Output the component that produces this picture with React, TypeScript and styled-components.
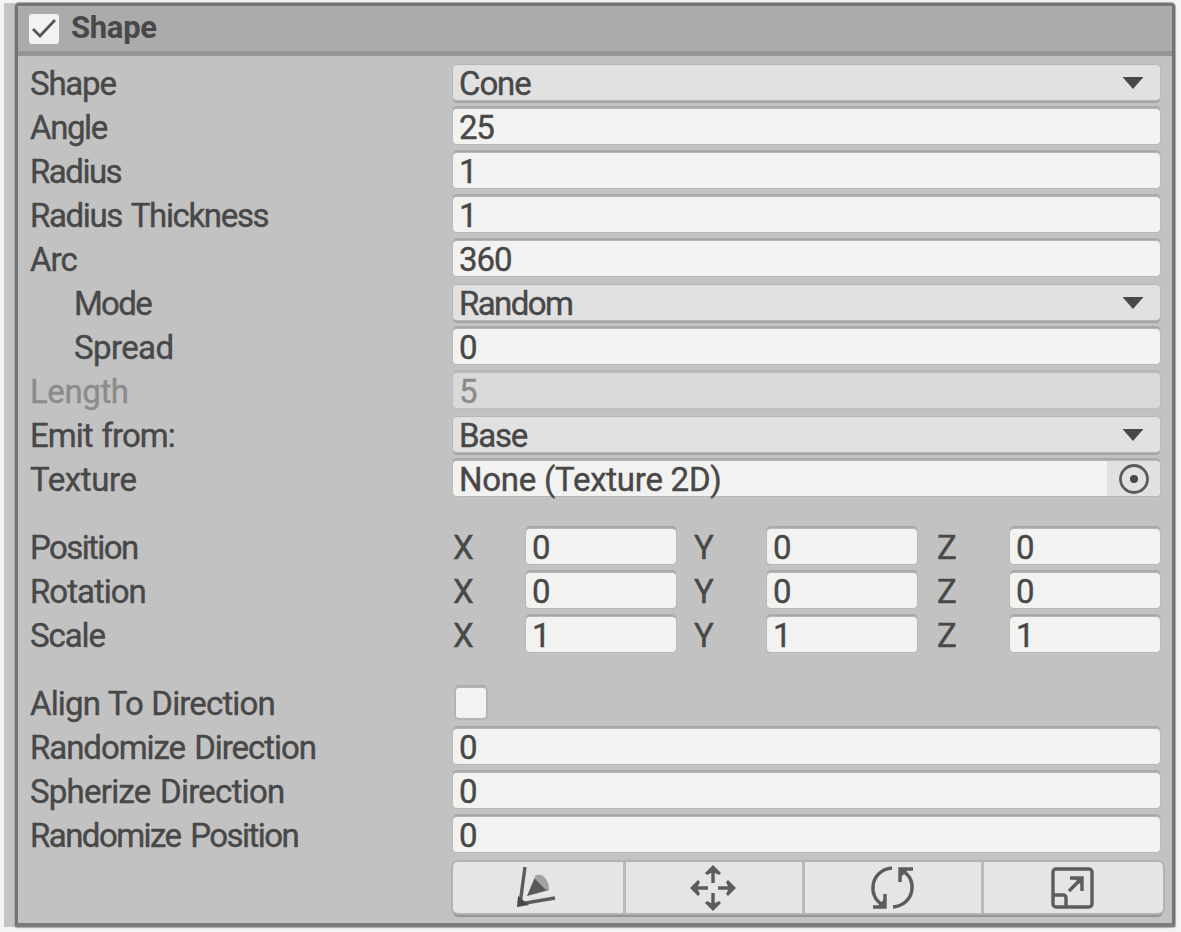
import React from "react";
import styled, { createGlobalStyle, css } from "styled-components";

const Global = createGlobalStyle`
  * { box-sizing: border-box; }
  body {
    margin: 0;
    background: #f4f4f3;
    font-family: Roboto, "Liberation Sans", sans-serif;
    color: #484848;
    -webkit-text-stroke: 0.4px currentColor;
  }
`;

const Page = styled.main`
  width: 1181px;
  height: 932px;
  padding: 3px 6px 5px 4px;
  display: flex;
`;

const Gutter = styled.div`
  flex: none;
  width: 11px;
  background: #c4c4c4;
`;

const Panel = styled.section`
  flex: 1;
  min-width: 0;
  display: flex;
  flex-direction: column;
  background: #c2c2c2;
  border: 3px solid #747474;
  border-bottom: 4px solid #7c7c7c;
  border-radius: 4px 4px 2px 2px;
  box-shadow: 0 0 1px 1px #a9a9a9;
`;

const Header = styled.header`
  height: 50px;
  display: flex;
  align-items: center;
  gap: 12px;
  padding: 0 0 0 11px;
  background: #ababab;
  border-bottom: 5px solid #959595;
  border-radius: 3px 3px 0 0;
`;

const Title = styled.h1`
  margin: 0 0 1px;
  font-size: 31px;
  line-height: 36px;
  font-weight: 700;
  letter-spacing: -0.3px;
  -webkit-text-stroke: 0;
`;

const CheckBox = styled.span<{ $outlined?: boolean }>`
  width: 30px;
  height: 30px;
  display: flex;
  border-radius: 3px;
  background: #f2f2f0;
  ${(p) => p.$outlined && css`
    margin: 3px 0 0 3px;
    box-shadow: 0 0 0 2px #b3b3b3, 0 -3px 0 0 #a9a9a9;
  `}
`;

const Body = styled.div`
  padding: 5px 0 0 12px;
`;

const Row = styled.div<{ $dim?: boolean }>`
  height: 44px;
  display: grid;
  grid-template-columns: 423px 707px;
  align-items: start;
  padding-top: 4px;
  color: ${(p) => (p.$dim ? "#8b8b8b" : "#484848")};
`;

const Spacer = styled.div`
  height: 24px;
`;

const Label = styled.span<{ $indent?: boolean; $track: number; $word?: number }>`
  padding-left: ${(p) => (p.$indent ? 44 : 0)}px;
  font-size: 33px;
  line-height: 38px;
  white-space: nowrap;
  letter-spacing: ${(p) => p.$track}px;
  word-spacing: ${(p) => p.$word ?? 0}px;
`;

const Field = styled.div<{ $kind?: "input" | "menu" | "dim" }>`
  height: 35px;
  display: flex;
  align-items: center;
  justify-content: space-between;
  padding-left: 6px;
  border-radius: 4px;
  font-size: 33px;
  line-height: 36px;
  white-space: nowrap;
  background: #f2f2f0;
  box-shadow: 0 0 0 1px #b8b8b8, 0 -3px 0 0 #a9a9a9;
  ${(p) => p.$kind === "menu" && css`
    background: #e1e1e1;
    box-shadow: 0 0 0 1px #b6b6b6, 0 3px 0 0 #a4a4a4;
  `}
  ${(p) => p.$kind === "dim" && css`
    background: #d9d9d9;
    box-shadow: 0 0 0 1px #bcbcbc, 0 -3px 0 0 #b6b6b6;
  `}
`;

const Value = styled.span<{ $track?: number }>`
  padding-top: 2px;
  letter-spacing: ${(p) => p.$track ?? 0}px;
`;

const Arrow = styled.svg`
  width: 22px;
  height: 14px;
  margin-right: 16px;
`;

const Picker = styled.span`
  width: 53px;
  height: 35px;
  display: flex;
  align-items: center;
  justify-content: center;
  background: #e1e1e1;
  border-radius: 0 4px 4px 0;
`;

const Axes = styled.div`
  display: grid;
  grid-template-columns: 73px 150px 18px 73px 150px 20px 73px 150px;
`;

const Axis = styled.span<{ $col: number }>`
  grid-column: ${(p) => p.$col};
  height: 35px;
  font-size: 33px;
  line-height: 38px;
`;

const Tools = styled.div`
  height: 51px;
  width: 710px;
  margin: 5px 0 0 423px;
  display: grid;
  grid-template-columns: 170px 179px 179px 182px;
  background: #e5e5e5;
  border-radius: 5px;
  box-shadow: 0 0 0 2px #b3b3b3, 0 4px 0 0 #949494;
`;

const Tool = styled.div`
  display: flex;
  align-items: center;
  justify-content: center;
  & + & {
    border-left: 3px solid #b9b9b9;
  }
`;

const Icon = styled.svg`
  width: 50px;
  height: 50px;
  fill: none;
  stroke: #5c5c5c;
  stroke-width: 3.4;
`;

const Down = () => (
  <Arrow viewBox="0 0 22 14">
    <path d="M0.5 1H21.5L11 13Z" fill="#484848" />
  </Arrow>
);

type Item = {
  label: string;
  value: string;
  track: number;
  word?: number;
  vt?: number;
  menu?: boolean;
  dim?: boolean;
  indent?: boolean;
};

const shapeItems: Item[] = [
  { label: "Shape", value: "Cone", track: -1.2, vt: -1.1, menu: true },
  { label: "Angle", value: "25", track: -1.4, vt: -1.4 },
  { label: "Radius", value: "1", track: -1.5 },
  { label: "Radius Thickness", value: "1", track: -1.35, word: 2.5 },
  { label: "Arc", value: "360", track: -1, vt: -1.1 },
  { label: "Mode", value: "Random", track: -1.7, vt: -1.6, menu: true, indent: true },
  { label: "Spread", value: "0", track: -0.6, indent: true },
  { label: "Length", value: "5", track: -0.4, dim: true },
  { label: "Emit from:", value: "Base", track: -0.95, word: 1.5, vt: -1.3, menu: true },
];

const randomItems: Item[] = [
  { label: "Randomize Direction", value: "0", track: -1.05, word: 2 },
  { label: "Spherize Direction", value: "0", track: -0.75, word: 2 },
  { label: "Randomize Position", value: "0", track: -1.55, word: 3 },
];

const vectors = [
  { label: "Position", value: "0", track: -1.6 },
  { label: "Rotation", value: "0", track: -1 },
  { label: "Scale", value: "1", track: -1.1 },
];

const Property = ({ item }: { item: Item }) => (
  <Row $dim={item.dim}>
    <Label $indent={item.indent} $track={item.track} $word={item.word}>{item.label}</Label>
    <Field $kind={item.menu ? "menu" : item.dim ? "dim" : "input"}>
      <Value $track={item.vt}>{item.value}</Value>
      {item.menu && <Down />}
    </Field>
  </Row>
);

export default function App() {
  return (
    <>
      <Global />
      <Page>
        <Gutter />
        <Panel>
          <Header>
            <CheckBox>
              <svg width="30" height="30" viewBox="0 0 30 30" fill="none" stroke="#555" strokeWidth="2.8">
                <path d="M4 15L11 22L26 6" />
              </svg>
            </CheckBox>
            <Title>Shape</Title>
          </Header>
          <Body>
            {shapeItems.map((i) => <Property key={i.label} item={i} />)}
            <Row>
              <Label $track={-0.4}>Texture</Label>
              <Field>
                <Value $track={-0.25}>None (Texture 2D)</Value>
                <Picker>
                  <svg width="32" height="32" viewBox="0 0 32 32">
                    <circle cx="16" cy="16" r="13.5" fill="none" stroke="#5a5a5a" strokeWidth="2.8" />
                    <circle cx="16" cy="16" r="4" fill="#484848" />
                  </svg>
                </Picker>
              </Field>
            </Row>
            <Spacer />
            {vectors.map((v) => (
              <Row key={v.label}>
                <Label $track={v.track}>{v.label}</Label>
                <Axes>
                  {["X", "Y", "Z"].map((axis, n) => (
                    <React.Fragment key={axis}>
                      <Axis $col={n * 3 + 1}>{axis}</Axis>
                      <Field><Value>{v.value}</Value></Field>
                    </React.Fragment>
                  ))}
                </Axes>
              </Row>
            ))}
            <Spacer />
            <Row>
              <Label $track={-0.85} $word={1}>Align To Direction</Label>
              <CheckBox $outlined />
            </Row>
            {randomItems.map((i) => <Property key={i.label} item={i} />)}
            <Tools>
              <Tool>
                <Icon viewBox="0 0 50 50">
                  <path d="M12 4L7 41L42 35" />
                  <path d="M5 33L4 44L16 42Z" fill="#484848" stroke="none" />
                  <path d="M14 33L22 14L36 27Z" fill="#5a5a5a" stroke="none" />
                  <path d="M22 13C28 9 36 16 36 26L33 27L22 16Z" fill="#a2a2a2" stroke="none" />
                </Icon>
              </Tool>
              <Tool>
                <Icon viewBox="0 0 50 50">
                  <path d="M24 20V9M24 30V41M19 25H8M29 25H40" />
                  <path d="M24 2L32 10L30 12L24 9L18 12L16 10ZM24 48L32 40L30 38L24 41L18 38L16 40ZM1 25L9 17L11 19L8 25L11 31L9 33ZM47 25L39 17L37 19L40 25L37 31L39 33Z" fill="#5c5c5c" stroke="none" />
                </Icon>
              </Tool>
              <Tool>
                <Icon viewBox="0 0 50 50">
                  <path d="M24 5C2 7-1 34 15 42M25 44C47 42 50 15 34 8" />
                  <path d="M5 44H17V31M45 6H32V19" />
                  <path d="M9 44L17 35V44ZM41 6L32 15V6Z" fill="#5c5c5c" stroke="none" />
                </Icon>
              </Tool>
              <Tool>
                <Icon viewBox="0 0 50 50">
                  <rect x="4" y="6" width="39" height="38" rx="3" />
                  <path d="M4 32H14Q17 32 17 35V44M20 28L33 15M21 15H33V28" />
                  <path d="M25 15H33V23Z" fill="#5c5c5c" stroke="none" />
                </Icon>
              </Tool>
            </Tools>
          </Body>
        </Panel>
      </Page>
    </>
  );
}
